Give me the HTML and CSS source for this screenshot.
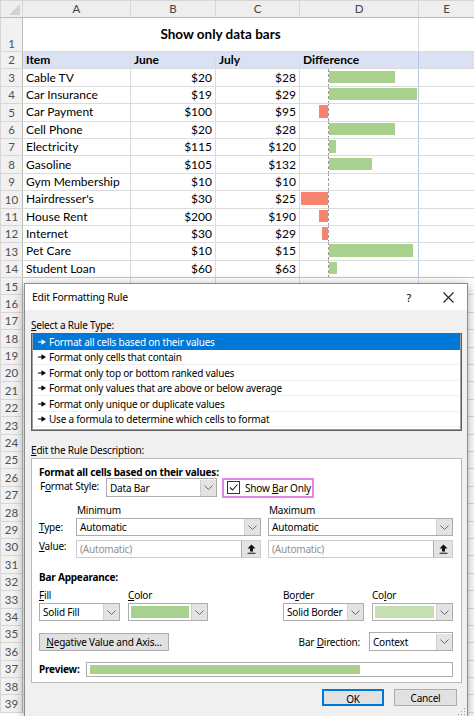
FILE: index.html
```html
<!DOCTYPE html>
<html lang="en">
<head>
    <meta charset="UTF-8">
    <meta name="viewport" content="width=device-width, initial-scale=1.0">
    <title>Show only data bars</title>
    <link rel="stylesheet" href="styles.css">
</head>
<body>
    <table class="sheet">
        <colgroup>
            <col class="col-hdr"><col class="col-a"><col class="col-b"><col class="col-c"><col class="col-d"><col class="col-e">
        </colgroup>
        <thead>
            <tr><th class="corner"><span class="tri"></span></th><th>A</th><th>B</th><th>C</th><th>D</th><th>E</th></tr>
        </thead>
        <tbody>
            <tr class="title-row"><th>1</th><td colspan="4" class="title">Show only data bars</td><td></td></tr>
            <tr class="head-row"><th>2</th><td>Item</td><td>June</td><td>July</td><td class="last">Difference</td><td></td></tr>
            <tr><th>3</th><td>Cable TV</td><td class="num">$20</td><td class="num">$28</td><td class="diff"><div class="bars"><div class="neg"></div><div class="pos"><i style="width:66px"></i></div></div></td><td></td></tr>
            <tr><th>4</th><td>Car Insurance</td><td class="num">$19</td><td class="num">$29</td><td class="diff"><div class="bars"><div class="neg"></div><div class="pos"><i style="width:88px"></i></div></div></td><td></td></tr>
            <tr><th>5</th><td>Car Payment</td><td class="num">$100</td><td class="num">$95</td><td class="diff"><div class="bars"><div class="neg"><i style="width:9px"></i></div><div class="pos"></div></div></td><td></td></tr>
            <tr><th>6</th><td>Cell Phone</td><td class="num">$20</td><td class="num">$28</td><td class="diff"><div class="bars"><div class="neg"></div><div class="pos"><i style="width:66px"></i></div></div></td><td></td></tr>
            <tr><th>7</th><td>Electricity</td><td class="num">$115</td><td class="num">$120</td><td class="diff"><div class="bars"><div class="neg"></div><div class="pos"><i style="width:7px"></i></div></div></td><td></td></tr>
            <tr><th>8</th><td>Gasoline</td><td class="num">$105</td><td class="num">$132</td><td class="diff"><div class="bars"><div class="neg"></div><div class="pos"><i style="width:43px"></i></div></div></td><td></td></tr>
            <tr><th>9</th><td>Gym Membership</td><td class="num">$10</td><td class="num">$10</td><td class="diff"><div class="bars"><div class="neg"></div><div class="pos"></div></div></td><td></td></tr>
            <tr><th>10</th><td>Hairdresser's</td><td class="num">$30</td><td class="num">$25</td><td class="diff"><div class="bars"><div class="neg"><i style="width:27px"></i></div><div class="pos"></div></div></td><td></td></tr>
            <tr><th>11</th><td>House Rent</td><td class="num">$200</td><td class="num">$190</td><td class="diff"><div class="bars"><div class="neg"><i style="width:9px"></i></div><div class="pos"></div></div></td><td></td></tr>
            <tr><th>12</th><td>Internet</td><td class="num">$30</td><td class="num">$29</td><td class="diff"><div class="bars"><div class="neg"><i style="width:6px"></i></div><div class="pos"></div></div></td><td></td></tr>
            <tr><th>13</th><td>Pet Care</td><td class="num">$10</td><td class="num">$15</td><td class="diff"><div class="bars"><div class="neg"></div><div class="pos"><i style="width:84px"></i></div></div></td><td></td></tr>
            <tr class="end-row"><th>14</th><td>Student Loan</td><td class="num">$60</td><td class="num">$63</td><td class="diff"><div class="bars"><div class="neg"></div><div class="pos"><i style="width:8px"></i></div></div></td><td></td></tr>
            <tr><th>15</th><td></td><td></td><td></td><td></td><td></td></tr>
            <tr><th>16</th><td></td><td></td><td></td><td></td><td></td></tr>
            <tr><th>17</th><td></td><td></td><td></td><td></td><td></td></tr>
            <tr><th>18</th><td></td><td></td><td></td><td></td><td></td></tr>
            <tr><th>19</th><td></td><td></td><td></td><td></td><td></td></tr>
            <tr><th>20</th><td></td><td></td><td></td><td></td><td></td></tr>
            <tr><th>21</th><td></td><td></td><td></td><td></td><td></td></tr>
            <tr><th>22</th><td></td><td></td><td></td><td></td><td></td></tr>
            <tr><th>23</th><td></td><td></td><td></td><td></td><td></td></tr>
            <tr><th>24</th><td></td><td></td><td></td><td></td><td></td></tr>
            <tr><th>25</th><td></td><td></td><td></td><td></td><td></td></tr>
            <tr><th>26</th><td></td><td></td><td></td><td></td><td></td></tr>
            <tr><th>27</th><td></td><td></td><td></td><td></td><td></td></tr>
            <tr><th>28</th><td></td><td></td><td></td><td></td><td></td></tr>
            <tr><th>29</th><td></td><td></td><td></td><td></td><td></td></tr>
            <tr><th>30</th><td></td><td></td><td></td><td></td><td></td></tr>
            <tr><th>31</th><td></td><td></td><td></td><td></td><td></td></tr>
            <tr><th>32</th><td></td><td></td><td></td><td></td><td></td></tr>
            <tr><th>33</th><td></td><td></td><td></td><td></td><td></td></tr>
            <tr><th>34</th><td></td><td></td><td></td><td></td><td></td></tr>
            <tr><th>35</th><td></td><td></td><td></td><td></td><td></td></tr>
            <tr><th>36</th><td></td><td></td><td></td><td></td><td></td></tr>
            <tr><th>37</th><td></td><td></td><td></td><td></td><td></td></tr>
            <tr><th>38</th><td></td><td></td><td></td><td></td><td></td></tr>
            <tr><th>39</th><td></td><td></td><td></td><td></td><td></td></tr>
        </tbody>
    </table>

    <div class="dialog">
        <div class="titlebar">
            <span>Edit Formatting Rule</span>
            <span class="title-btns">
                <span class="help">?</span>
                <svg class="close" width="11" height="11" viewBox="0 0 11 11"><path d="M0.5 0.5L10.5 10.5M10.5 0.5L0.5 10.5" stroke="#222" stroke-width="1.1" fill="none"/></svg>
            </span>
        </div>
        <div class="dlg-body">
            <div class="caption"><u>S</u>elect a Rule Type:</div>
            <ul class="rule-list">
                <li class="selected"><svg class="arrow" width="8" height="6" viewBox="0 0 8 6"><path d="M0 2.4h3.5v1.2H0z M3.5 0.3L8 3 3.5 5.7z" fill="currentColor"/></svg>Format all cells based on their values</li>
                <li><svg class="arrow" width="8" height="6" viewBox="0 0 8 6"><path d="M0 2.4h3.5v1.2H0z M3.5 0.3L8 3 3.5 5.7z" fill="currentColor"/></svg>Format only cells that contain</li>
                <li><svg class="arrow" width="8" height="6" viewBox="0 0 8 6"><path d="M0 2.4h3.5v1.2H0z M3.5 0.3L8 3 3.5 5.7z" fill="currentColor"/></svg>Format only top or bottom ranked values</li>
                <li><svg class="arrow" width="8" height="6" viewBox="0 0 8 6"><path d="M0 2.4h3.5v1.2H0z M3.5 0.3L8 3 3.5 5.7z" fill="currentColor"/></svg>Format only values that are above or below average</li>
                <li><svg class="arrow" width="8" height="6" viewBox="0 0 8 6"><path d="M0 2.4h3.5v1.2H0z M3.5 0.3L8 3 3.5 5.7z" fill="currentColor"/></svg>Format only unique or duplicate values</li>
                <li><svg class="arrow" width="8" height="6" viewBox="0 0 8 6"><path d="M0 2.4h3.5v1.2H0z M3.5 0.3L8 3 3.5 5.7z" fill="currentColor"/></svg>Use a formula to determine which cells to format</li>
            </ul>

            <div class="caption desc-caption"><u>E</u>dit the Rule Description:</div>
            <div class="panel">
                <div class="bold">Format all cells based on their values:</div>

                <div class="style-row">
                    <span class="lbl">F<u>o</u>rmat Style:</span>
                    <div class="combo style-combo"><span class="val">Data Bar</span><span class="drop"><svg width="9" height="5" viewBox="0 0 9 5"><path d="M0.5 0.5L4.5 4.5 8.5 0.5" stroke="#6a6a6a" fill="none"/></svg></span></div>
                    <div class="bar-only">
                        <span class="check"><svg width="11" height="11" viewBox="0 0 11 11"><path d="M2 5.5L4.5 8 9.5 2.5" stroke="#222" stroke-width="1.1" fill="none"/></svg></span>
                        <span>Show <u>B</u>ar Only</span>
                    </div>
                </div>

                <div class="minmax">
                    <span></span>
                    <span class="sub">Minimum</span>
                    <span class="sub">Maximum</span>

                    <span class="lbl"><u>T</u>ype:</span>
                    <div class="combo"><span class="val">Automatic</span><span class="drop"><svg width="9" height="5" viewBox="0 0 9 5"><path d="M0.5 0.5L4.5 4.5 8.5 0.5" stroke="#6a6a6a" fill="none"/></svg></span></div>
                    <div class="combo"><span class="val">Automatic</span><span class="drop"><svg width="9" height="5" viewBox="0 0 9 5"><path d="M0.5 0.5L4.5 4.5 8.5 0.5" stroke="#6a6a6a" fill="none"/></svg></span></div>

                    <span class="lbl"><u>V</u>alue:</span>
                    <div class="field"><span class="val muted">(Automatic)</span><span class="pick"><svg width="9" height="10" viewBox="0 0 9 10"><path d="M4.5 0.5L8.5 4.5H6v3H3v-3H0.5z M0.5 8.7h8v1.1h-8z" fill="#111"/></svg></span></div>
                    <div class="field"><span class="val muted">(Automatic)</span><span class="pick"><svg width="9" height="10" viewBox="0 0 9 10"><path d="M4.5 0.5L8.5 4.5H6v3H3v-3H0.5z M0.5 8.7h8v1.1h-8z" fill="#111"/></svg></span></div>
                </div>

                <div class="bold appearance">Bar Appearance:</div>
                <div class="appearance-grid">
                    <span><u>F</u>ill</span>
                    <span><u>C</u>olor</span>
                    <span></span>
                    <span>Bo<u>r</u>der</span>
                    <span>Co<u>l</u>or</span>

                    <div class="combo"><span class="val">Solid Fill</span><span class="drop"><svg width="9" height="5" viewBox="0 0 9 5"><path d="M0.5 0.5L4.5 4.5 8.5 0.5" stroke="#6a6a6a" fill="none"/></svg></span></div>
                    <div class="combo"><span class="swatch fill-green"></span><span class="drop"><svg width="9" height="5" viewBox="0 0 9 5"><path d="M0.5 0.5L4.5 4.5 8.5 0.5" stroke="#6a6a6a" fill="none"/></svg></span></div>
                    <span></span>
                    <div class="combo"><span class="val">Solid Border</span><span class="drop"><svg width="9" height="5" viewBox="0 0 9 5"><path d="M0.5 0.5L4.5 4.5 8.5 0.5" stroke="#6a6a6a" fill="none"/></svg></span></div>
                    <div class="combo"><span class="swatch border-green"></span><span class="drop"><svg width="9" height="5" viewBox="0 0 9 5"><path d="M0.5 0.5L4.5 4.5 8.5 0.5" stroke="#6a6a6a" fill="none"/></svg></span></div>
                </div>

                <div class="axis-row">
                    <button class="btn axis-btn"><u>N</u>egative Value and Axis...</button>
                    <div class="direction">
                        <span>Bar <u>D</u>irection:</span>
                        <div class="combo dir-combo"><span class="val">Context</span><span class="drop"><svg width="9" height="5" viewBox="0 0 9 5"><path d="M0.5 0.5L4.5 4.5 8.5 0.5" stroke="#6a6a6a" fill="none"/></svg></span></div>
                    </div>
                </div>

                <div class="preview-row">
                    <span class="bold">Preview:</span>
                    <div class="preview"><i></i></div>
                </div>
            </div>

            <div class="footer">
                <button class="btn ok">OK</button>
                <button class="btn">Cancel</button>
            </div>
        </div>
        <svg class="grip" width="9" height="9" viewBox="0 0 9 9"><path d="M7 1h1v1H7z M4 4h1v1H4z M7 4h1v1H7z M1 7h1v1H1z M4 7h1v1H4z M7 7h1v1H7z" fill="#9a9a9a"/></svg>
    </div>
</body>
</html>
```

FILE: styles.css
```css
body {
    margin: 0;
    width: 474px;
    height: 716px;
    overflow: hidden;
    position: relative;
    background: #fff;
    font-family: 'Lato', sans-serif;
}

/* spreadsheet */

.sheet {
    border-collapse: collapse;
    table-layout: fixed;
    width: 474px;
    font-size: 12px;
    color: #000;
}

.col-hdr { width: 22px; }
.col-a { width: 108px; }
.col-b { width: 85px; }
.col-c { width: 84px; }
.col-d { width: 119px; }
.col-e { width: 56px; }

.sheet tr {
    height: 17.4px;
}

.sheet td {
    padding: 0 3px;
    border: 1px solid #dcdcdc;
    white-space: nowrap;
    overflow: hidden;
    line-height: 1;
}

.sheet th {
    padding: 0;
    background: #f1f1f1;
    border: 1px solid #d6d6d6;
    color: #505050;
    font-weight: normal;
    font-size: 11.5px;
    line-height: 1;
}

.sheet thead tr {
    height: 17px;
}

.sheet thead th {
    background: #eeeeee;
    border-bottom: 1px solid #bcbcbc;
    color: #444;
}

.sheet tbody th {
    border-right: 1px solid #bcbcbc;
}

.corner {
    position: relative;
}

.tri {
    position: absolute;
    right: 2px;
    bottom: 2px;
    border-left: 11px solid transparent;
    border-bottom: 11px solid #d2d2d2;
}

.title-row {
    height: 34px !important;
}

.title-row th {
    vertical-align: bottom;
    padding-bottom: 2px;
}

.title {
    text-align: center;
    font-weight: bold;
    font-size: 13.5px;
}

.head-row td {
    font-weight: bold;
    background: #d9e1f2;
}

.num {
    text-align: right;
}

.last,
.diff {
    border-right: 1px solid #b4c6e7 !important;
}

.end-row td {
    border-bottom-color: #c4c4c4;
}

.sheet td.diff {
    padding: 0;
}

.bars {
    display: flex;
    height: 16px;
}

.bars .neg {
    width: 28px;
    display: flex;
    justify-content: flex-end;
}

.bars .pos {
    flex: 1;
    border-left: 1px dashed #9a9a9a;
    margin: -1px 0;
    padding-top: 1px;
}

.bars i {
    display: block;
    height: 12.5px;
    margin-top: 1px;
}

.neg i {
    background: #f8836f;
}

.pos i {
    background: #a9d18e;
}

/* dialog */

.dialog {
    position: absolute;
    left: 24px;
    top: 283px;
    width: 442px;
    height: 433px;
    border: 1px solid #8c8c8c;
    background: #f0f0f0;
    box-shadow: 0 2px 10px rgba(0, 0, 0, 0.35);
    font-family: 'Noto Sans', sans-serif;
    font-size: 10px;
    letter-spacing: -0.2px;
    color: #000;
}

.titlebar {
    height: 26px;
    background: #fff;
    display: flex;
    justify-content: space-between;
    align-items: center;
    padding-left: 7px;
    font-size: 10.4px;
}

.title-btns {
    display: flex;
    align-items: center;
}

.help {
    font-size: 11px;
    margin-right: 32px;
}

.close {
    margin-right: 13px;
}

.dlg-body {
    padding: 8px 5px 0 6px;
}

.caption {
    line-height: 14px;
}

.rule-list {
    list-style: none;
    margin: 1px 0 0;
    padding: 0 0 3px;
    background: #fff;
    border: 1px solid #5f5f5f;
    box-shadow: inset 0 0 0 1px #a0a0a0;
}

.rule-list li {
    height: 15.5px;
    padding: 1px 0 0 5px;
    display: flex;
    align-items: center;
    border-bottom: 1px solid #f0f0f0;
    box-sizing: border-box;
    margin: 0 1px;
}

.rule-list li.selected {
    background: #0078d7;
    color: #fff;
    border-bottom-color: #0078d7;
}

.arrow {
    margin-right: 3px;
}

.desc-caption {
    margin-top: 12px;
}

.panel {
    margin-top: 1px;
    background: #fff;
    border: 1px solid #b9b9b9;
    padding: 6px 8px 5px 7px;
}

.bold {
    font-weight: bold;
    line-height: 15px;
}

.style-row {
    display: flex;
    align-items: center;
    height: 21px;
    margin-top: -3px;
}

.style-row .lbl {
    width: 66px;
    margin-top: -3px;
    padding-left: 1px;
}

.combo,
.field {
    display: flex;
    align-items: center;
    height: 18px;
    box-sizing: border-box;
    border: 1px solid #adadad;
    background: #fff;
}

.combo .val,
.field .val {
    flex: 1;
    padding-left: 3px;
    white-space: nowrap;
    overflow: hidden;
}

.drop {
    width: 15px;
    height: 16px;
    background: #e3e3e3;
    border-left: 1px solid #cfcfcf;
    display: flex;
    align-items: center;
    justify-content: center;
}

.style-combo {
    width: 111px;
    height: 19px;
}

.bar-only {
    margin-left: 5px;
    width: 92px;
    height: 20px;
    box-sizing: border-box;
    border: 2px solid #e685e6;
    display: flex;
    align-items: center;
    gap: 5px;
    padding-left: 3px;
    white-space: nowrap;
}

.check {
    width: 11px;
    height: 11px;
    border: 1px solid #333;
    display: flex;
    flex-shrink: 0;
}

.minmax {
    display: grid;
    grid-template-columns: 30px 185px 185px;
    column-gap: 7px;
    grid-template-rows: 14px 18px 18px;
    row-gap: 1px;
    margin-top: 5px;
}

.minmax .sub {
    line-height: 14px;
    padding-left: 1px;
}

.minmax .lbl {
    line-height: 18px;
    white-space: nowrap;
}

.minmax .field {
    margin-top: 3px;
    border-color: #cccccc;
}

.muted {
    color: #8f8f8f;
}

.pick {
    width: 18px;
    height: 16px;
    background: #e3e3e3;
    border-left: 1px solid #adadad;
    display: flex;
    align-items: center;
    justify-content: center;
}

.appearance {
    margin-top: 15px;
}

.appearance-grid {
    display: grid;
    grid-template-columns: 81px 80px 1fr 81px 81px;
    column-gap: 8px;
    grid-template-rows: 14px 18px;
    row-gap: 1px;
    margin-top: 3px;
}

.appearance-grid > span {
    line-height: 14px;
}

.swatch {
    flex: 1;
    height: 12px;
    margin: 0 2px;
}

.fill-green {
    background: #a9d18e;
}

.border-green {
    background: #c6e0b4;
}

.axis-row {
    display: flex;
    justify-content: space-between;
    align-items: center;
    height: 19px;
    margin-top: 11px;
}

.btn {
    font-family: 'Noto Sans', sans-serif;
    font-size: 10px;
    letter-spacing: -0.2px;
    color: #000;
    background: #e1e1e1;
    border: 1px solid #adadad;
    padding: 0;
    height: 18px;
    line-height: 16px;
}

.axis-btn {
    width: 130px;
}

.direction {
    display: flex;
    align-items: center;
    gap: 9px;
}

.dir-combo {
    width: 84px;
    height: 19px;
}

.preview-row {
    display: flex;
    align-items: center;
    margin-top: 11px;
}

.preview-row .bold {
    width: 47px;
}

.preview {
    flex: 1;
    height: 15px;
    box-sizing: border-box;
    border: 1px solid #adadad;
    padding: 2px 3px;
}

.preview i {
    display: block;
    width: 270px;
    height: 9px;
    background: #a9d18e;
}

.footer {
    display: flex;
    justify-content: flex-end;
    gap: 10px;
    margin-top: 6px;
    padding-right: 5px;
}

.footer .btn {
    width: 63px;
    height: 17px;
}

.footer .ok {
    border: 2px solid #0078d7;
    width: 62px;
}

.grip {
    position: absolute;
    right: 1px;
    bottom: 1px;
}
```
